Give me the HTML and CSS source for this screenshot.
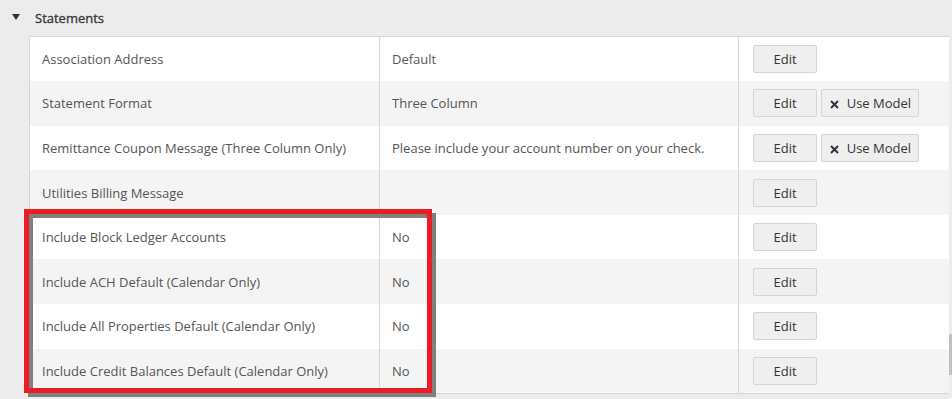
FILE: index.html
```html
<!DOCTYPE html>
<html lang="en">
<head>
    <meta charset="UTF-8">
    <meta name="viewport" content="width=device-width, initial-scale=1.0">
    <title>Statements</title>
    <link rel="stylesheet" href="styles.css">
</head>
<body>
    <div class="section">
        <div class="section-header">
            <span class="caret"></span>
            <span class="section-title">Statements</span>
        </div>

        <table class="settings-table">
            <tr>
                <td class="col-name">Association Address</td>
                <td class="col-value">Default</td>
                <td class="col-actions"><button class="btn">Edit</button></td>
            </tr>
            <tr>
                <td class="col-name">Statement Format</td>
                <td class="col-value">Three Column</td>
                <td class="col-actions">
                    <button class="btn">Edit</button>
                    <button class="btn btn-model"><svg class="x-icon" width="9" height="9" viewBox="0 0 9 9"><path d="M1 1L8 8M8 1L1 8" stroke="#333" stroke-width="2"/></svg>Use Model</button>
                </td>
            </tr>
            <tr>
                <td class="col-name">Remittance Coupon Message (Three Column Only)</td>
                <td class="col-value">Please include your account number on your check.</td>
                <td class="col-actions">
                    <button class="btn">Edit</button>
                    <button class="btn btn-model"><svg class="x-icon" width="9" height="9" viewBox="0 0 9 9"><path d="M1 1L8 8M8 1L1 8" stroke="#333" stroke-width="2"/></svg>Use Model</button>
                </td>
            </tr>
            <tr>
                <td class="col-name">Utilities Billing Message</td>
                <td class="col-value"></td>
                <td class="col-actions"><button class="btn">Edit</button></td>
            </tr>
            <tr>
                <td class="col-name">Include Block Ledger Accounts</td>
                <td class="col-value">No</td>
                <td class="col-actions"><button class="btn">Edit</button></td>
            </tr>
            <tr>
                <td class="col-name">Include ACH Default (Calendar Only)</td>
                <td class="col-value">No</td>
                <td class="col-actions"><button class="btn">Edit</button></td>
            </tr>
            <tr>
                <td class="col-name">Include All Properties Default (Calendar Only)</td>
                <td class="col-value">No</td>
                <td class="col-actions"><button class="btn">Edit</button></td>
            </tr>
            <tr>
                <td class="col-name">Include Credit Balances Default (Calendar Only)</td>
                <td class="col-value">No</td>
                <td class="col-actions"><button class="btn">Edit</button></td>
            </tr>
        </table>
    </div>

    <!-- annotation box drawn over the last four rows -->
    <div class="highlight-box"></div>
    <div class="scroll-thumb"></div>
</body>
</html>
```

FILE: styles.css
```css
body {
    margin: 0;
    background: #ececec;
    font-family: "Open Sans", Arial, sans-serif;
    font-size: 13px;
    color: #555;
    position: relative;
    height: 399px;
    overflow: hidden;
}
.section-header {
    height: 36px;
    display: flex;
    align-items: center;
    padding-left: 12px;
}
.caret {
    width: 0;
    height: 0;
    border-left: 4px solid transparent;
    border-right: 4px solid transparent;
    border-top: 6px solid #333;
    margin-top: -2px;
}
.section-title {
    margin-left: 15px;
    margin-top: -1px;
    color: #333;
    -webkit-text-stroke: 0.3px #333;
}
.settings-table {
    margin-left: 29px;
    width: 920px;
    border-collapse: collapse;
    border-top: 1px solid #d6d6d6;
    border-bottom: 1px solid #d6d6d6;
    border-left: 1px solid #d6d6d6;
    table-layout: fixed;
}
.settings-table tr {
    height: 44.6px;
    background: #fff;
}
.settings-table tr:nth-child(even) {
    background: #f4f4f4;
}
.settings-table td {
    padding: 0 12px;
    vertical-align: middle;
    white-space: nowrap;
}
.col-name {
    width: 325px;
}
.col-value {
    width: 334px;
    border-left: 1px solid #d6d6d6;
}
.col-actions {
    border-left: 1px solid #d6d6d6;
    padding-left: 14px !important;
}
.btn {
    font-family: "Open Sans", Arial, sans-serif;
    font-size: 13px;
    color: #333;
    background: #efefef;
    border: 1px solid #d4d4d4;
    border-radius: 2px;
    height: 28px;
    width: 64px;
    padding: 0;
    margin-right: 1px;
    vertical-align: middle;
}
.btn-model {
    width: 98px;
}
.x-icon {
    vertical-align: -1px;
    margin-right: 8px;
}
.highlight-box {
    position: absolute;
    left: 24px;
    top: 209px;
    width: 408px;
    height: 184px;
    box-sizing: border-box;
    border: 5px solid #ed1c24;
    box-shadow: 4px 4px 0 #808080, inset 4px 4px 0 #808080;
    pointer-events: none;
}
.scroll-thumb {
    position: absolute;
    left: 949px;
    top: 334px;
    width: 3px;
    height: 41px;
    background: #c1c1c1;
}
```
